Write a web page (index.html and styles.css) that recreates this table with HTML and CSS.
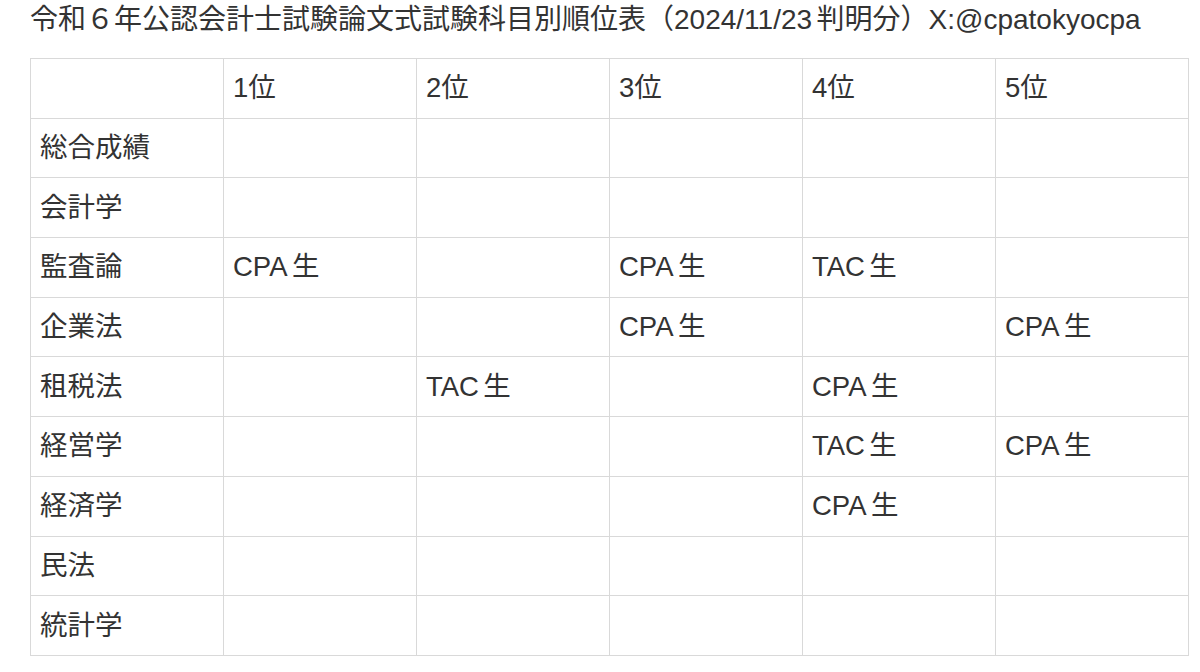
FILE: index.html
```html
<!DOCTYPE html>
<html lang="ja">
<head>
<meta charset="utf-8">
<title>令和６年公認会計士試験論文式試験科目別順位表</title>
<link rel="stylesheet" href="styles.css">
</head>
<body>
<div class="page">
  <h1 class="title">令和６年公認会計士試験論文式試験科目別順位表（2024/11/<span class="lat">23</span>判明分）X:@cpatokyocpa</h1>
  <table class="rank">
    <thead>
      <tr><th></th><th>1位</th><th>2位</th><th>3位</th><th>4位</th><th>5位</th></tr>
    </thead>
    <tbody>
      <tr><td>総合成績</td><td></td><td></td><td></td><td></td><td></td></tr>
      <tr><td>会計学</td><td></td><td></td><td></td><td></td><td></td></tr>
      <tr><td>監査論</td><td><span class="lat">CPA</span>生</td><td></td><td><span class="lat">CPA</span>生</td><td><span class="lat">TAC</span>生</td><td></td></tr>
      <tr><td>企業法</td><td></td><td></td><td><span class="lat">CPA</span>生</td><td></td><td><span class="lat">CPA</span>生</td></tr>
      <tr><td>租税法</td><td></td><td><span class="lat">TAC</span>生</td><td></td><td><span class="lat">CPA</span>生</td><td></td></tr>
      <tr><td>経営学</td><td></td><td></td><td></td><td><span class="lat">TAC</span>生</td><td><span class="lat">CPA</span>生</td></tr>
      <tr><td>経済学</td><td></td><td></td><td></td><td><span class="lat">CPA</span>生</td><td></td></tr>
      <tr><td>民法</td><td></td><td></td><td></td><td></td><td></td></tr>
      <tr><td>統計学</td><td></td><td></td><td></td><td></td><td></td></tr>
    </tbody>
  </table>
</div>
</body>
</html>
```

FILE: styles.css
```css
html, body {
  margin: 0;
  padding: 0;
  background: #ffffff;
}

body {
  font-family: "Liberation Sans", "Noto Sans CJK JP", sans-serif;
  color: #333333;
}

.page {
  padding: 0 0 0 30px;
}

.title {
  margin: 0 0 18px 0;
  font-size: 28px;
  font-weight: normal;
  line-height: 40px;
  white-space: nowrap;
  color: #333333;
}

.lat {
  margin-right: 0.16em;
}

.rank {
  border-collapse: collapse;
  table-layout: fixed;
  width: 1159px;
}

.rank th,
.rank td {
  box-sizing: border-box;
  border: 1px solid #d9d9d9;
  height: 59.7px;
  padding: 0 9px;
  text-align: left;
  vertical-align: middle;
  font-size: 27.5px;
  font-weight: normal;
  line-height: 32px;
  color: #333333;
  white-space: nowrap;
}
```
